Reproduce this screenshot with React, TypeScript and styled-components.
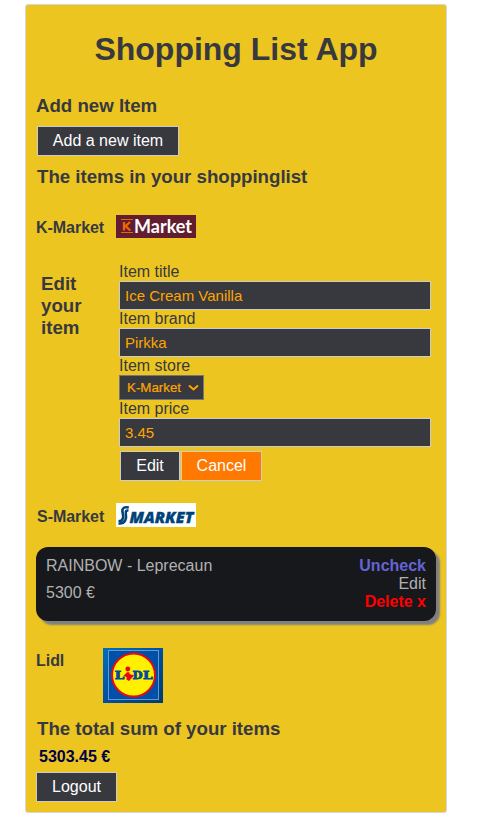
import React from "react";
import styled, { createGlobalStyle } from "styled-components";

const GlobalStyle = createGlobalStyle`
  *, *::before, *::after { box-sizing: border-box; }
  body {
    margin: 0;
    background: #fff;
    font-family: "Liberation Sans", Arial, sans-serif;
    font-size: 16px;
    line-height: 18px;
    color: #37393f;
  }
  button, input, select { font-family: inherit; }
`;

const Card = styled.main`
  display: flex;
  flex-direction: column;
  align-items: stretch;
  width: 422px;
  height: 809px;
  margin: 4px 0 0 25px;
  padding: 0 10px;
  background: #edc521;
  border: 1px solid #d6d6d9;
  border-radius: 3px;
`;

const Title = styled.h1`
  margin: 26px 0 0;
  font-size: 32px;
  line-height: 36px;
  text-align: center;
`;

const Heading = styled.h3<{ $top: number; $indent?: number }>`
  margin: ${(p) => p.$top}px 0 0 ${(p) => p.$indent ?? 0}px;
  font-size: 18.72px;
  line-height: 22px;
  letter-spacing: -0.03px;
`;

const Button = styled.button<{ $width: number; $accent?: boolean }>`
  width: ${(p) => p.$width}px;
  height: 30px;
  padding: 0;
  border: 1px solid #ccc;
  background: ${(p) => (p.$accent ? "#ff7800" : "#37393f")};
  color: #fff;
  font-size: 16px;
  line-height: 18px;
`;

const ButtonSlot = styled.div<{ $top: number; $indent?: number }>`
  display: flex;
  gap: 1px;
  margin: ${(p) => p.$top}px 0 0 ${(p) => p.$indent ?? 0}px;
`;

const StoreRow = styled.section<{ $top: number; $label: number; $indent?: number; $drop?: number }>`
  display: flex;
  align-items: flex-start;
  margin-top: ${(p) => p.$top}px;
  padding-left: ${(p) => p.$indent ?? 0}px;

  h4 {
    width: ${(p) => p.$label}px;
    margin: ${(p) => p.$drop ?? 4}px 0 0;
    font-size: 16px;
    line-height: 18px;
    letter-spacing: -0.04px;
  }
  svg { display: block; }
`;

const EditPanel = styled.section`
  display: grid;
  grid-template-columns: 78px 312px;
  margin-top: 25px;
  padding-left: 5px;
`;

const EditHeading = styled.h3`
  width: 50px;
  margin: 10px 0 0;
  font-size: 18.72px;
  line-height: 22px;
`;

const Form = styled.form`
  display: flex;
  flex-direction: column;
`;

const Label = styled.label`
  height: 18px;
`;

const Input = styled.input`
  width: 312px;
  height: 29px;
  padding: 0 5px;
  border: 1px solid #ccc;
  background: #37393f;
  color: #ffa500;
  font-size: 15px;
`;

const SelectBox = styled.button`
  display: flex;
  align-items: center;
  justify-content: space-between;
  width: 85px;
  height: 25px;
  padding: 0 4px 0 7px;
  border: 1px solid #767676;
  background: #37393f;
  color: #ffa500;
  font-size: 13.33px;
  -webkit-text-stroke: 0.2px #ffa500;
`;

const Item = styled.article`
  display: flex;
  justify-content: space-between;
  height: 74px;
  margin-top: 20px;
  padding: 10px;
  border-radius: 12px;
  background: #17181c;
  color: #b1b1b1;
  box-shadow: 4px 4px 2px #808080;
`;

const ItemInfo = styled.div`
  display: flex;
  flex-direction: column;
  gap: 9px;
`;

const ItemActions = styled.div`
  display: flex;
  flex-direction: column;
  align-items: flex-end;
`;

const Action = styled.span<{ $color?: string }>`
  color: ${(p) => p.$color ?? "inherit"};
  font-weight: ${(p) => (p.$color ? "bold" : "normal")};
`;

const Total = styled.strong`
  margin: 8px 0 0 3px;
  color: #00004a;
`;

const KMarketLogo = () => (
  <svg width="80" height="23" viewBox="0 0 80 23" role="img" aria-label="K Market">
    <rect width="80" height="23" fill="#621e30" />
    <path d="M5 4.500h12M5 17.500h12" stroke="#f06400" strokeWidth="1.2" />
    <path d="M8 7v8.500M14 7l-4.500 4.200L14.300 15.500" stroke="#f06400" strokeWidth="2.300" fill="none" />
    <text x="18" y="18" fill="#fff" fontFamily="Lato" fontWeight="bold" fontSize="18.500" textLength="58" lengthAdjust="spacingAndGlyphs">Market</text>
  </svg>
);

const SMarketLogo = () => (
  <svg width="80" height="24" viewBox="0 0 80 24" role="img" aria-label="S Market">
    <rect width="80" height="24" fill="#fff" />
    <path d="M12.800 4.500C8.500 3.500 6.300 5 6.400 8c.1 2.600 1.300 4.500.6 7-.5 2-2 3.200-4.500 3.200" stroke="#00437a" strokeWidth="2.600" fill="none" />
    <path d="M12.500 7.600c-2.200-.3-3 .6-2.700 2.400.4 2.500.9 5-.6 7.500-1.300 2.200-3.500 3.300-6.700 2.900" stroke="#00437a" strokeWidth="2.500" fill="none" />
    <text x="13.500" y="20" fill="#00437a" stroke="#00437a" strokeWidth=".3" fontFamily="Open Sans" fontWeight="800" fontStyle="italic" fontSize="15" textLength="64" lengthAdjust="spacingAndGlyphs">MARKET</text>
  </svg>
);

const LidlLogo = () => (
  <svg width="60" height="55" viewBox="0 0 60 55" role="img" aria-label="Lidl">
    <defs>
      <linearGradient id="lidlBlue" x1="0" y1="0" x2="1" y2="1">
        <stop offset="0" stopColor="#0070b8" />
        <stop offset=".5" stopColor="#004fa3" />
        <stop offset="1" stopColor="#003b70" />
      </linearGradient>
    </defs>
    <rect width="60" height="55" fill="url(#lidlBlue)" />
    <rect x="5.500" y="2.500" width="50" height="49" fill="#004fa8" stroke="#6699cb" />
    <circle cx="30.500" cy="27" r="21.500" fill="#fff000" stroke="#e30b17" strokeWidth="2" />
    <g fill="#004a9f" stroke="#004a9f" strokeWidth=".8" fontFamily="DejaVu Serif" fontWeight="bold" fontSize="10.500">
      <text x="11.700" y="31" textLength="9.500" lengthAdjust="spacingAndGlyphs">L</text>
      <text x="29.500" y="31" textLength="10" lengthAdjust="spacingAndGlyphs">D</text>
      <text x="40" y="31" textLength="9.500" lengthAdjust="spacingAndGlyphs">L</text>
    </g>
    <circle cx="24.800" cy="21" r="2.400" fill="#e30b17" />
    <path d="M20.300 28l3.700-3.700h2.500V26l4.500 1.500-5 5.500-2.500-1.500V29z" fill="#e30b17" />
  </svg>
);

export default function App() {
  return (
    <>
      <GlobalStyle />
      <Card>
        <Title>Shopping List App</Title>
        <Heading $top={28}>Add new Item</Heading>
        <ButtonSlot $top={9} $indent={1}>
          <Button $width={142}>Add a new item</Button>
        </ButtonSlot>
        <Heading $top={10} $indent={1}>The items in your shoppinglist</Heading>

        <StoreRow $top={27} $label={80}>
          <h4>K-Market</h4>
          <KMarketLogo />
        </StoreRow>

        <EditPanel>
          <EditHeading>Edit your item</EditHeading>
          <Form onSubmit={(e) => e.preventDefault()}>
            <Label htmlFor="title">Item title</Label>
            <Input id="title" defaultValue="Ice Cream Vanilla" />
            <Label htmlFor="brand">Item brand</Label>
            <Input id="brand" defaultValue="Pirkka" />
            <Label htmlFor="store">Item store</Label>
            <SelectBox id="store" type="button" aria-haspopup="listbox">
              K-Market
              <svg width="11" height="8" viewBox="0 0 11 8" fill="none" stroke="#ffa500" strokeWidth="2">
                <path d="M1 1.500l4.500 4 4.500-4" />
              </svg>
            </SelectBox>
            <Label htmlFor="price">Item price</Label>
            <Input id="price" defaultValue="3.45" />
            <ButtonSlot $top={4} $indent={1}>
              <Button $width={60}>Edit</Button>
              <Button $width={81} $accent type="button">Cancel</Button>
            </ButtonSlot>
          </Form>
        </EditPanel>

        <StoreRow $top={22} $label={79} $indent={1} $drop={5}>
          <h4>S-Market</h4>
          <SMarketLogo />
        </StoreRow>
        <Item>
          <ItemInfo>
            <span>RAINBOW - Leprecaun</span>
            <span>5300 €</span>
          </ItemInfo>
          <ItemActions>
            <Action $color="#6464d4">Uncheck</Action>
            <Action>Edit</Action>
            <Action $color="#ff0000">Delete x</Action>
          </ItemActions>
        </Item>

        <StoreRow $top={27} $label={67}>
          <h4>Lidl</h4>
          <LidlLogo />
        </StoreRow>

        <Heading $top={15} $indent={1}>The total sum of your items</Heading>
        <Total>5303.45 €</Total>
        <ButtonSlot $top={6}>
          <Button $width={81}>Logout</Button>
        </ButtonSlot>
      </Card>
    </>
  );
}
